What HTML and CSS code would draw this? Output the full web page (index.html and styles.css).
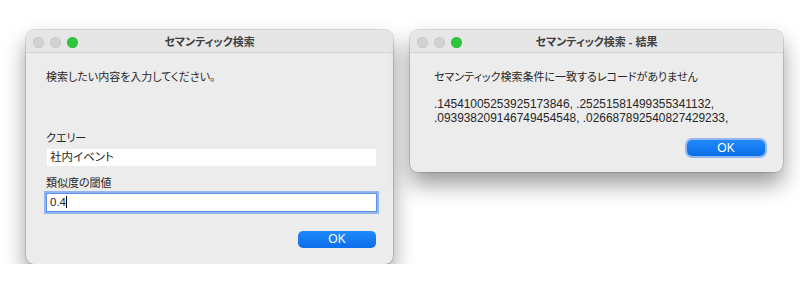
FILE: index.html
```html
<!DOCTYPE html>
<html lang="ja">
<head>
    <meta charset="UTF-8">
    <title>セマンティック検索</title>
    <link rel="stylesheet" href="styles.css">
</head>
<body>
    <div class="dialog dialog-input">
        <div class="titlebar">
            <div class="lights">
                <span class="light"></span>
                <span class="light"></span>
                <span class="light green"></span>
            </div>
            <div class="title">セマンティック検索</div>
        </div>
        <div class="dialog-body">
            <p class="prompt">検索したい内容を入力してください。</p>
            <label class="field-label">クエリー</label>
            <div class="field">社内イベント</div>
            <label class="field-label">類似度の閾値</label>
            <div class="field focused">0.4<span class="caret"></span></div>
            <div class="actions">
                <button class="ok-btn">OK</button>
            </div>
        </div>
    </div>
    <div class="dialog dialog-result">
        <div class="titlebar">
            <div class="lights">
                <span class="light"></span>
                <span class="light"></span>
                <span class="light green"></span>
            </div>
            <div class="title">セマンティック検索 - 結果</div>
        </div>
        <div class="dialog-body">
            <p class="prompt">セマンティック検索条件に一致するレコードがありません</p>
            <p class="scores">.14541005253925173846, .25251581499355341132,<br>.093938209146749454548, .026687892540827429233,</p>
            <div class="actions">
                <button class="ok-btn default">OK</button>
            </div>
        </div>
    </div>
</body>
</html>
```
FILE: styles.css
```css
:root {
    --window-bg: #ececec; --title-bg: #e6e6e6; --divider: #d3d3d3;
    --text: #262626; --title-text: #404040; --light-gray: #d2d2d2;
    --green: #2dc53e; --blue-top: #2189fb; --blue-bottom: #0b6ee9;
}
body { margin: 0; background: #fff; font-family: "Liberation Sans", "Noto Sans CJK JP", sans-serif; color: var(--text); display: flex; align-items: flex-start; gap: 17px; padding: 30px 0 0 26px; }
.dialog { background: var(--window-bg); border-radius: 8px; box-shadow: 0 0 0 0.5px rgba(0, 0, 0, 0.25), 0 12px 22px rgba(0, 0, 0, 0.4); overflow: hidden; }
.dialog-input { width: 367px; }
.dialog-result { width: 373px; }
.titlebar { height: 22px; background: var(--title-bg); border-bottom: 1px solid var(--divider); display: grid; grid-template-columns: 1fr auto 1fr; align-items: center; }
.lights { display: flex; gap: 6px; padding: 2px 0 0 7px; }
.light { width: 11px; height: 11px; border-radius: 50%; background: var(--light-gray); box-shadow: inset 0 0 0 0.5px rgba(0, 0, 0, 0.08); }
.light.green { background: var(--green); }
.title { font-size: 11px; font-weight: 600; color: var(--title-text); font-feature-settings: "palt"; }
.dialog-body { display: flex; flex-direction: column; padding: 17px 17px 16px 20px; }
.prompt { margin: 0; font-size: 11px; line-height: 14px; font-feature-settings: "palt"; }
.field-label { margin: 47px 0 4px; font-size: 11px; line-height: 14px; font-feature-settings: "palt"; }
.field + .field-label { margin-top: 10px; margin-bottom: 4px; }
.field { margin-left: 1px; height: 17px; box-sizing: border-box; padding: 0 3px; background: #fff; font-size: 11.5px; line-height: 17px; font-feature-settings: "palt"; }
.field.focused { box-shadow: 0 0 0 1px #5d93e6, 0 0 0 3px rgba(110, 160, 240, 0.7); }
.caret { display: inline-block; width: 1px; height: 12px; background: #000; vertical-align: -2px; }
.actions { display: flex; justify-content: flex-end; margin-top: 20px; }
.ok-btn { width: 78px; height: 17px; padding: 0; border: none; border-radius: 5px; background: linear-gradient(var(--blue-top), var(--blue-bottom)); color: #fff; font-family: "Liberation Sans", sans-serif; font-size: 12px; line-height: 17px; }
.dialog-result .dialog-body { padding: 17px 18px 16px 24px; }
.scores { margin: 14px 0 0; font-size: 11.9px; line-height: 13.5px; }
.dialog-result .actions { margin-top: 15px; }
.ok-btn.default { height: 16px; box-shadow: 0 0 0 2px rgba(90, 150, 240, 0.6); }
```
